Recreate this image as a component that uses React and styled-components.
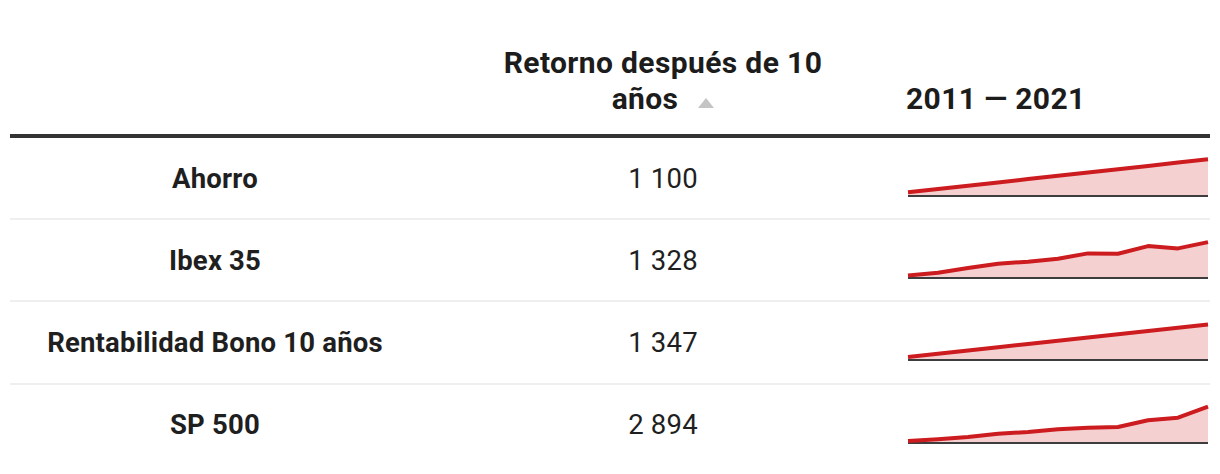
import React from "react";
import styled, { createGlobalStyle } from "styled-components";

const Global = createGlobalStyle`
  html, body { margin: 0; padding: 0; background: #fff; }
  body { font-family: Roboto, "Noto Sans", "Liberation Sans", sans-serif; color: #1f1f1f; }
`;

const Page = styled.div`
  padding: 0 10px;
  width: 1200px;
`;

const Table = styled.div`
  display: grid;
  grid-template-columns: 410px 486px 304px;
`;

const HeadCell = styled.div`
  height: 138px;
  box-sizing: border-box;
  display: flex;
  align-items: flex-end;
  justify-content: ${(p) => (p.$align === "left" ? "flex-start" : "center")};
  text-align: ${(p) => (p.$align === "left" ? "left" : "center")};
  padding-bottom: 17px;
  border-bottom: 4px solid #333;
  font-size: 30px;
  letter-spacing: 0.38px;
  line-height: 36px;
  font-weight: 700;
  color: #1c1c1c;
`;

const HeadLabel = styled.span`
  max-width: 350px;
`;

const SortIcon = styled.svg`
  display: inline-block;
  width: 16px;
  height: 10px;
  margin-left: 20px;
  vertical-align: 1px;
`;

const Cell = styled.div`
  height: 80.2px;
  border-bottom: ${(p) => (p.$last ? "none" : "2px solid #efefef")};
  display: flex;
  align-items: center;
  justify-content: ${(p) => (p.$chart ? "flex-start" : "center")};
  padding-left: ${(p) => (p.$chart ? "2px" : "0")};
  font-size: 27.5px;
  letter-spacing: 0.2px;
  font-weight: ${(p) => (p.$bold ? 700 : 400)};
  color: #1f1f1f;
`;

const Spark = styled.svg`
  display: block;
  width: 300px;
  height: 42px;
  overflow: visible;
`;

const linear = (a, b) =>
  Array.from({ length: 11 }, (_, i) => a + ((b - a) * i) / 10);

const rows = [
  { name: "Ahorro", value: "1 100", h: linear(3.4, 36.4) },
  {
    name: "Ibex 35",
    value: "1 328",
    h: [2.3, 5, 9.6, 14, 16, 19, 24.3, 24, 31.6, 29.3, 35.6],
  },
  {
    name: "Rentabilidad Bono 10 años",
    value: "1 347",
    h: linear(2.6, 35.3),
  },
  {
    name: "SP 500",
    value: "2 894",
    h: [1.7, 3.4, 5.7, 9, 10.7, 13.4, 15, 15.7, 22.4, 25, 36],
  },
];

function Sparkline({ h }) {
  const pts = h.map((v, i) => [i * 30, 38.7 - v]);
  const line = pts.map((p) => p.join(",")).join(" ");
  const area = `0,39 ${line} 300,39`;
  return (
    <Spark viewBox="0 0 300 42">
      <polygon points={area} fill="#f4d0d1" />
      <rect x="0" y="38" width="300" height="2" fill="#3d3d3d" />
      <polyline
        points={line}
        fill="none"
        stroke="#cc1c1f"
        strokeWidth="4"
        strokeLinejoin="round"
      />
    </Spark>
  );
}

export default function App() {
  return (
    <Page>
      <Global />
      <Table>
        <HeadCell />
        <HeadCell>
          <HeadLabel>
            Retorno después de 10 años
            <SortIcon viewBox="0 0 16 10">
              <polygon points="8,0 16,10 0,10" fill="#c4c4c4" />
            </SortIcon>
          </HeadLabel>
        </HeadCell>
        <HeadCell $align="left">2011 — 2021</HeadCell>
        {rows.map((r, i) => {
          const last = i === rows.length - 1;
          return (
            <React.Fragment key={r.name}>
              <Cell $bold $last={last}>{r.name}</Cell>
              <Cell $last={last}>{r.value}</Cell>
              <Cell $chart $last={last}>
                <Sparkline h={r.h} />
              </Cell>
            </React.Fragment>
          );
        })}
      </Table>
    </Page>
  );
}
